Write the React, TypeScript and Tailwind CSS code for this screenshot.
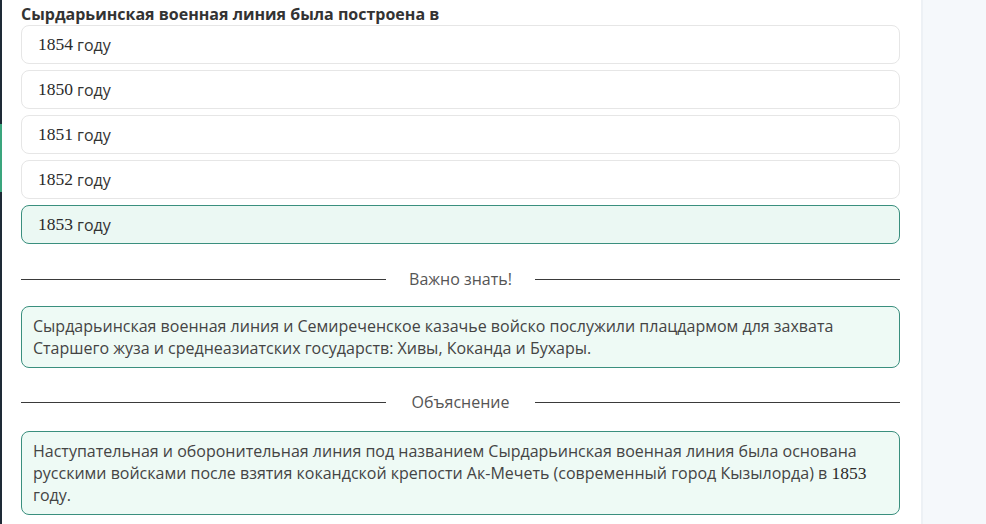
const options = ['1854', '1850', '1851', '1852', '1853'];
const correct = '1853';

function Num({ children }: { children: string }) {
  return <span className="font-['Liberation_Serif',serif] text-[17.5px] leading-none text-[#2a2a2a]">{children}</span>;
}

function Divider({ label, className }: { label: string; className?: string }) {
  return (
    <div className={`flex h-[24px] items-center ${className ?? ''}`}>
      <div className="h-px flex-1 bg-[#3a3a3a]" />
      <div className="w-[149px] text-center text-[16px] leading-[24px] text-[#555]">{label}</div>
      <div className="h-px flex-1 bg-[#3a3a3a]" />
    </div>
  );
}

export default function App() {
  return (
    <div className="flex h-[524px] w-[986px] overflow-hidden bg-white font-['Open_Sans',sans-serif]">
      <div className="flex w-[2px] flex-col">
        <div className="h-[124px] bg-[#1e2a36]" />
        <div className="h-[68px] bg-[#3aa57d]" />
        <div className="flex-1 bg-[#1e2a36]" />
      </div>

      <div className="w-[919px] pl-[19px] pr-[21px]">
        <h2 className="pt-[4px] text-[16px] font-bold leading-[20px] text-[#333]">
          Сырдарьинская военная линия была построена в
        </h2>

        <div className="mt-[1px] flex flex-col gap-[6px]">
          {options.map((o) => (
            <div
              key={o}
              className={`flex h-[39px] items-center rounded-[8px] border px-[16px] text-[16px] text-[#333] ${
                o === correct ? 'border-[#3a8f7e] bg-[#ebf8f3]' : 'border-[#e6e6e6] bg-white'
              }`}
            >
              <Num>{o}</Num>
              <span className="ml-[4px]">году</span>
            </div>
          ))}
        </div>

        <Divider label="Важно знать!" className="mt-[23px]" />

        <div className="mt-[15px] rounded-[8px] border border-[#3a8f7e] bg-[#eefaf5] px-[11px] py-[8px] text-[16px] leading-[22px] text-[#444]">
          Сырдарьинская военная линия и Семиреченское казачье войско послужили плацдармом для захвата
          Старшего жуза и среднеазиатских государств: Хивы, Коканда и Бухары.
        </div>

        <Divider label="Объяснение" className="mt-[22px]" />

        <div className="mt-[17px] rounded-[8px] border border-[#3a8f7e] bg-[#eefaf5] px-[11px] py-[8px] text-[16px] leading-[22px] text-[#444]">
          Наступательная и оборонительная линия под названием Сырдарьинская военная линия была основана
          русскими войсками после взятия кокандской крепости Ак-Мечеть (современный город Кызылорда) в{' '}
          <Num>1853</Num> году.
        </div>
      </div>

      <div className="flex-1 border-l-2 border-[#edf1f5] bg-[#f5f8fb]" />
    </div>
  );
}
